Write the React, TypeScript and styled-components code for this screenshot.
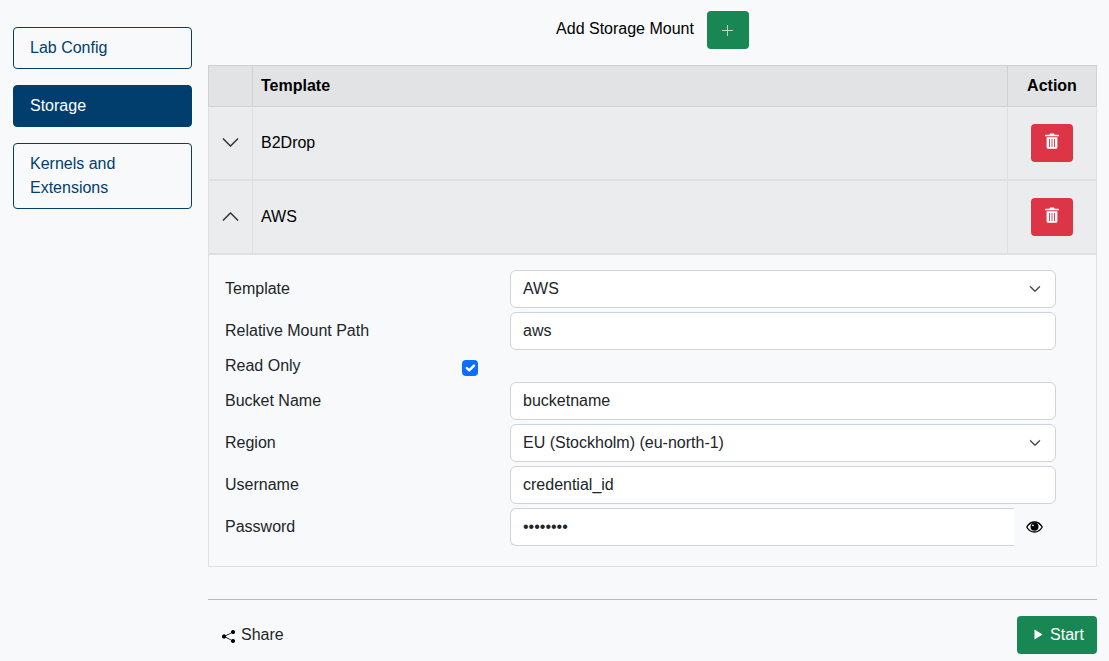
import React from "react";
import styled, { createGlobalStyle } from "styled-components";
import { BsChevronDown, BsChevronUp, BsPlusLg, BsShareFill } from "react-icons/bs";

const Global = createGlobalStyle`
  * { box-sizing: border-box; }
  html, body { margin: 0; height: 100%; }
  body {
    background: #f8f9fa;
    color: #212529;
    font-family: "Liberation Sans", Arial, sans-serif;
    font-size: 16px;
    line-height: 24px;
  }
`;

const Page = styled.div`
  display: flex;
  gap: 16px;
  height: 661px;
  padding: 0 12px 0 13px;
  overflow: hidden;
`;

const Sidebar = styled.nav`
  flex: 0 0 179px;
  display: flex;
  flex-direction: column;
  gap: 16px;
  padding-top: 27px;
`;

const NavItem = styled.a<{ $active?: boolean }>`
  display: block;
  padding: 8px 16px;
  border: 1px solid #023e6d;
  border-radius: 4px;
  background: ${(p) => (p.$active ? "#023e6d" : "transparent")};
  color: ${(p) => (p.$active ? "#ffffff" : "#023e6d")};
`;

const Main = styled.main`
  flex: 1;
  min-width: 0;
`;

const AddBar = styled.div`
  display: flex;
  justify-content: center;
  align-items: center;
  gap: 13px;
  height: 65px;
  padding: 11px 0 16px;
  color: #000;
`;

const AddLabel = styled.span`
  padding-bottom: 3px;
`;

const ActionButton = styled.button<{ $tone: "green" | "red" }>`
  display: inline-flex;
  align-items: center;
  justify-content: center;
  width: 42px;
  height: 38px;
  padding: 0;
  border: 0;
  border-radius: 4px;
  color: #fff;
  background: ${(p) => (p.$tone === "green" ? "#198754" : "#dc3545")};
`;

const PlusIcon = styled(BsPlusLg)`
  font-size: 15px;
  color: #b9dccb;
`;

const Table = styled.table`
  width: 100%;
  table-layout: fixed;
  border-collapse: collapse;
  color: #000;
`;

const HeadCell = styled.th<{ $center?: boolean }>`
  height: 41px;
  padding: 0 8px 1px;
  background: #e2e3e5;
  border: 1px solid #d0d1d3;
  font-weight: 700;
  text-align: ${(p) => (p.$center ? "center" : "left")};
`;

const Cell = styled.td<{ $center?: boolean; $height: number }>`
  height: ${(p) => p.$height}px;
  padding: 0 8px;
  background: #ebecee;
  border: 1px solid #dfe0e2;
  border-bottom-width: 2px;
  text-align: ${(p) => (p.$center ? "center" : "left")};
`;

const ToggleCell = styled(Cell)`
  padding: 0;
  text-align: center;
  svg {
    display: inline-block;
    vertical-align: middle;
    font-size: 19px;
    color: #212529;
    margin-top: -2px;
    stroke: currentColor;
    stroke-width: 0.25;
  }
`;

const ActionCell = styled(Cell)`
  line-height: 0;
`;

const DetailCell = styled.td`
  padding: 15px 16px 20px;
  border: 1px solid #dee2e6;
  background: #f8f9fa;
`;

const Form = styled.div`
  display: flex;
  flex-direction: column;
  gap: 4px;
  padding-right: 24px;
`;

const FormRow = styled.div`
  display: grid;
  grid-template-columns: 285px 1fr;
  align-items: center;
  min-height: 38px;
`;

const CheckRow = styled.div`
  display: flex;
  align-items: center;
  height: 24px;
`;

const RowLabel = styled.label`
  color: #212529;
`;

const ReadOnlyLabel = styled(RowLabel)`
  width: 237px;
`;

const CheckBox = styled.span`
  display: inline-flex;
  width: 16px;
  height: 16px;
  margin-top: 4px;
  border-radius: 4px;
  background: #0d6efd;
`;

const fieldStyle = `
  display: block;
  width: 100%;
  height: 38px;
  padding: 6px 12px;
  border: 1px solid #ced4da;
  border-radius: 6px;
  background: #fff;
  color: #212529;
  font: 16px/24px "Liberation Sans", Arial, sans-serif;
  outline: none;
`;

const Field = styled.input`
  ${fieldStyle}
`;

const SelectBox = styled.div`
  ${fieldStyle}
  display: flex;
  align-items: center;
  justify-content: space-between;
  svg { font-size: 12px; margin-right: 2px; stroke-width: 1; stroke: currentColor; color: #343a40; }
`;

const PasswordGroup = styled.div`
  display: flex;
  align-items: center;
`;

const PasswordField = styled(Field)`
  flex: 0 0 504px;
  width: 504px;
  border-right: 0;
  border-radius: 6px 0 0 6px;
`;

const EyeSlot = styled.span`
  flex: 1;
  display: flex;
  justify-content: center;
  padding-right: 1px;
`;

const Divider = styled.hr`
  margin: 32px 0 16px;
  border: 0;
  border-top: 1px solid #b9bbbd;
`;

const Footer = styled.div`
  display: flex;
  align-items: center;
  justify-content: space-between;
`;

const ShareLink = styled.a`
  display: inline-flex;
  align-items: center;
  gap: 6px;
  padding-left: 14px;
  color: #212529;
  svg { font-size: 13px; color: #000; margin-top: 3px; }
`;

const StartButton = styled.button`
  display: inline-flex;
  align-items: center;
  justify-content: center;
  gap: 7px;
  width: 80px;
  height: 38px;
  padding: 0 0 0 4px;
  border: 0;
  border-radius: 4px;
  background: #198754;
  color: #fff;
  font: 16px/24px "Liberation Sans", Arial, sans-serif;
`;

const TrashSvg = styled.svg`
  margin-bottom: 3px;
`;

const TrashIcon = () => (
  <TrashSvg width="14" height="16" viewBox="0 0 14 16" fill="#fff">
    <path d="M5 0.5h4l0.6 1.2H13.300a0.700 0.700 0 0 1 0.700 0.700v0.900H0v-0.900a0.700 0.700 0 0 1 0.700-0.700H4.400z" />
    <path fillRule="evenodd" d="M1.600 4.200h10.800v10.100a1.500 1.500 0 0 1-1.500 1.500H3.100a1.500 1.500 0 0 1-1.500-1.500zM4 6v8h0.900V6zM6.550 6v8h0.900V6zM9.100 6v8h0.900V6z" />
  </TrashSvg>
);

const EyeIcon = () => (
  <svg width="17" height="12" viewBox="0 0 17 12">
    <path d="M0.800 6C2.600 2.800 5.300 1 8.500 1s5.900 1.800 7.700 5c-1.800 3.200-4.500 5-7.700 5S2.600 9.200 0.800 6z" fill="#fff" stroke="#000" strokeWidth="1.300" />
    <circle cx="8.500" cy="5.800" r="4" fill="#000" />
    <circle cx="7" cy="4.300" r="0.900" fill="#fff" />
  </svg>
);

const PlayIcon = () => (
  <svg width="9" height="11" viewBox="0 0 9 11">
    <path d="M0.500 0.500 8.500 5.500 0.500 10.500z" fill="#fff" />
  </svg>
);

const CheckMark = () => (
  <svg width="16" height="16" viewBox="0 0 20 20" fill="none">
    <path d="M6 10l3 3l6-6" stroke="#fff" strokeWidth="3" strokeLinecap="round" strokeLinejoin="round" />
  </svg>
);

const Select = ({ value }: { value: string }) => (
  <SelectBox>
    {value}
    <BsChevronDown />
  </SelectBox>
);

const Row = ({ label, children }: { label: string; children: React.ReactNode }) => (
  <FormRow>
    <RowLabel>{label}</RowLabel>
    {children}
  </FormRow>
);

const DeleteButton = () => (
  <ActionButton $tone="red" aria-label="Delete">
    <TrashIcon />
  </ActionButton>
);

export default function App() {
  return (
    <>
      <Global />
      <Page>
        <Sidebar>
          <NavItem>Lab Config</NavItem>
          <NavItem $active>Storage</NavItem>
          <NavItem>Kernels and Extensions</NavItem>
        </Sidebar>
        <Main>
          <AddBar>
            <AddLabel>Add Storage Mount</AddLabel>
            <ActionButton $tone="green" aria-label="Add">
              <PlusIcon />
            </ActionButton>
          </AddBar>
          <Table>
            <colgroup>
              <col style={{ width: 44 }} />
              <col />
              <col style={{ width: 89 }} />
            </colgroup>
            <thead>
              <tr>
                <HeadCell />
                <HeadCell>Template</HeadCell>
                <HeadCell $center>Action</HeadCell>
              </tr>
            </thead>
            <tbody>
              <tr>
                <ToggleCell $height={73}><BsChevronDown /></ToggleCell>
                <Cell $height={73}>B2Drop</Cell>
                <ActionCell $height={73} $center><DeleteButton /></ActionCell>
              </tr>
              <tr>
                <ToggleCell $height={74}><BsChevronUp /></ToggleCell>
                <Cell $height={74}>AWS</Cell>
                <ActionCell $height={74} $center><DeleteButton /></ActionCell>
              </tr>
              <tr>
                <DetailCell colSpan={3}>
                  <Form>
                    <Row label="Template"><Select value="AWS" /></Row>
                    <Row label="Relative Mount Path"><Field defaultValue="aws" /></Row>
                    <CheckRow>
                      <ReadOnlyLabel>Read Only</ReadOnlyLabel>
                      <CheckBox><CheckMark /></CheckBox>
                    </CheckRow>
                    <Row label="Bucket Name"><Field defaultValue="bucketname" /></Row>
                    <Row label="Region"><Select value="EU (Stockholm) (eu-north-1)" /></Row>
                    <Row label="Username"><Field defaultValue="credential_id" /></Row>
                    <Row label="Password">
                      <PasswordGroup>
                        <PasswordField type="password" defaultValue="password" />
                        <EyeSlot><EyeIcon /></EyeSlot>
                      </PasswordGroup>
                    </Row>
                  </Form>
                </DetailCell>
              </tr>
            </tbody>
          </Table>
          <Divider />
          <Footer>
            <ShareLink><BsShareFill />Share</ShareLink>
            <StartButton><PlayIcon />Start</StartButton>
          </Footer>
        </Main>
      </Page>
    </>
  );
}
